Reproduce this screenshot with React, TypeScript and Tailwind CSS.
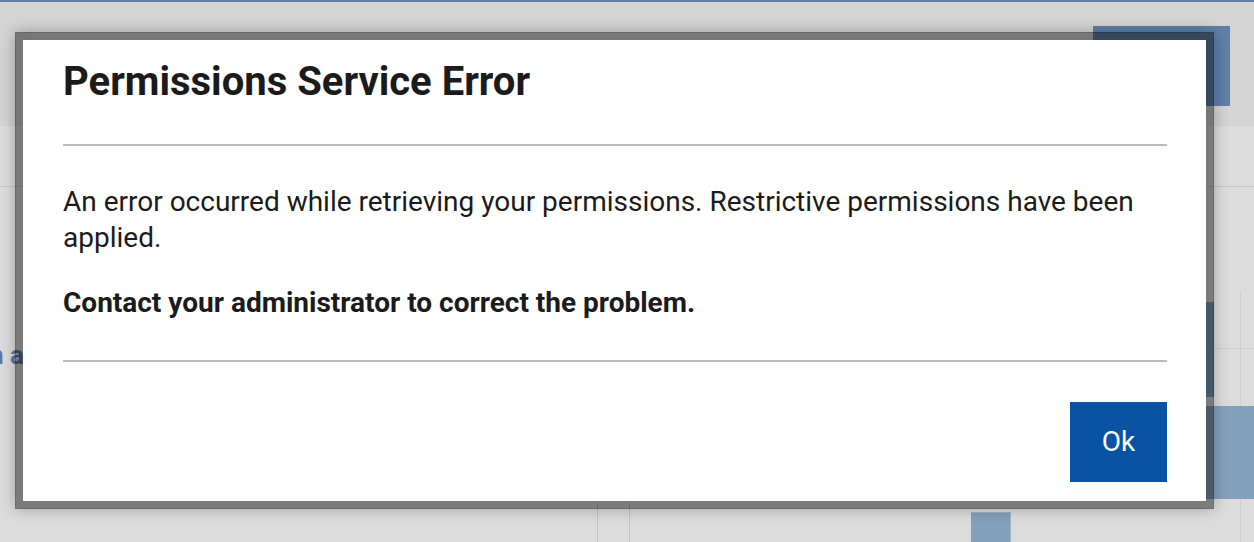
import React from "react";

export default function App() {
  return (
    <div className="relative w-[1254px] h-[542px] overflow-hidden bg-[#dcdcdc] font-['Roboto',sans-serif]">
      {/* background page (dimmed) */}
      <div className="h-[2px] bg-[#5f80a8]" />
      <div className="h-[124px] bg-[#d4d4d4] flex justify-end pt-[24px] pr-[24px]">
        <div className="w-[137px] h-[80px] bg-[#5f80a8]" />
      </div>
      <div className="h-[61px] border-b border-[#c8c8c8]" />
      <div className="flex h-[355px]">
        <div className="w-[598px] border-r border-[#c2c2c2] pt-[150px]">
          <div className="-ml-[11px] text-[26px] leading-[36px] font-bold text-[#5a78a2]">n a</div>
        </div>
        <div className="w-[32px] border-r border-[#c2c2c2]" />
        <div className="flex-1 flex flex-col">
          <div className="h-[115px]" />
          <div className="h-[95px] flex justify-end">
            <div className="w-[150px] bg-[#7d9bbd]" />
          </div>
          <div className="h-[115px]" />
          <div className="flex-1 flex">
            <div className="ml-[341px] w-[40px] bg-[#84a0bb] border-t border-r border-[#9fb4c9]" />
          </div>
        </div>
        <div className="w-[40px] flex flex-col">
          <div className="h-[105px]" />
          <div className="h-[57px] flex border-b border-[#cfcfcf]">
            <div className="w-[27px] border-r border-[#cfcfcf]" />
          </div>
          <div className="h-[57px] flex">
            <div className="w-[27px] border-r border-[#cfcfcf]" />
          </div>
          <div className="h-[93px] -ml-[20px] bg-[#84a0bb]" />
          <div className="flex-1 flex">
            <div className="w-[27px] border-r border-[#cfcfcf]" />
          </div>
        </div>
      </div>

      {/* modal dialog */}
      <div className="absolute left-[15px] top-[32px] w-[1199px] border-[8px] border-[rgba(0,0,0,0.44)] bg-white bg-clip-padding shadow-[0_0_14px_rgba(0,0,0,0.28)]">
        <div className="pl-[40px] pr-[39px] pt-[18px] pb-[19px] text-[#1b1b1b]">
          <h1 className="text-[40px] leading-[48px] font-bold">Permissions Service Error</h1>
          <div className="mt-[38px] h-[2px] bg-[#bbbbbb]" />
          <p className="mt-[38px] text-[28px] leading-[36px]">
            An error occurred while retrieving your permissions. Restrictive permissions have been applied.
          </p>
          <p className="mt-[29px] text-[28px] leading-[36px] font-bold">
            Contact your administrator to correct the problem.
          </p>
          <div className="mt-[39px] h-[2px] bg-[#bbbbbb]" />
          <div className="mt-[40px] flex justify-end">
            <button className="w-[97px] h-[80px] bg-[#0a52a3] text-white text-[28px] leading-none">Ok</button>
          </div>
        </div>
      </div>
    </div>
  );
}
